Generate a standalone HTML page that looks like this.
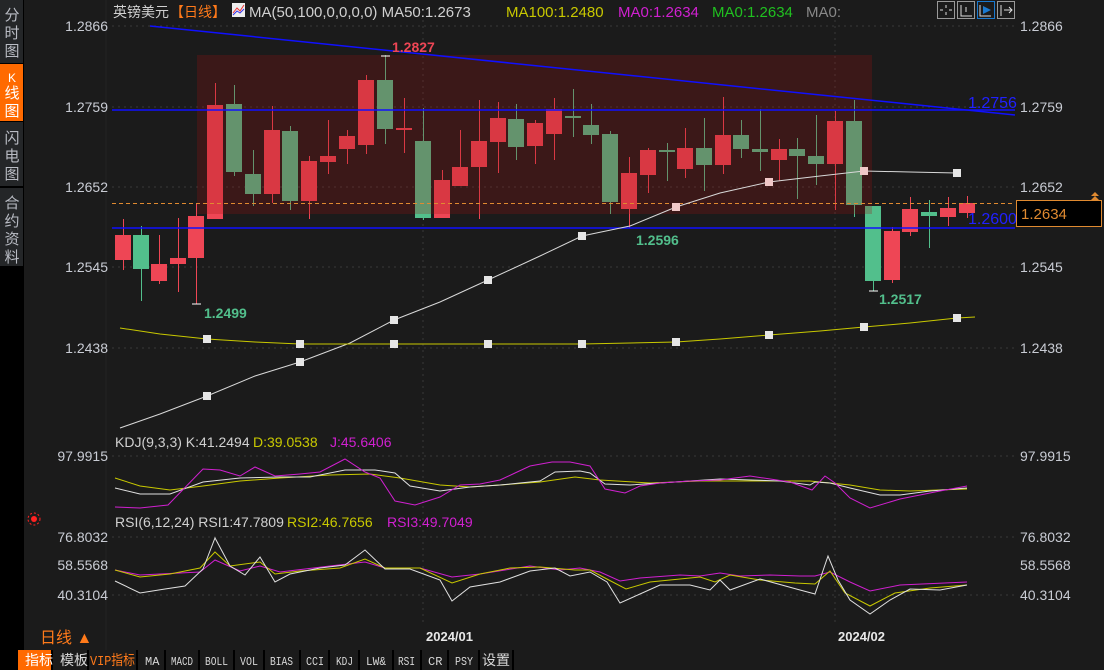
<!DOCTYPE html>
<html><head><meta charset="utf-8"><style>
body{margin:0;background:#1b1b1b;width:1104px;height:670px;overflow:hidden}
svg{display:block;font-family:"Liberation Sans","Noto Sans CJK SC",sans-serif}
.ax{fill:#c9ccd4;font-size:14px}
.tb{font-family:"Liberation Mono","Noto Sans CJK SC",monospace;font-size:12px;fill:#d8d8d8}
</style></head><body>
<svg width="1104" height="670" viewBox="0 0 1104 670">
<rect width="1104" height="670" fill="#1b1b1b"/>
<rect x="0" y="0" width="24" height="650" fill="#000"/>
<rect x="0" y="0" width="23" height="63" fill="#242628"/>
<rect x="0" y="64" width="23" height="57" fill="#ff6a00"/>
<rect x="0" y="122" width="23" height="64" fill="#242628"/>
<rect x="0" y="188" width="23" height="78" fill="#242628"/>
<g font-size="15" fill="#b9bcc4" text-anchor="middle">
<text x="12" y="20">分</text><text x="12" y="38">时</text><text x="12" y="56">图</text>
<text x="12" y="82" fill="#fff" font-size="12">K</text><text x="12" y="98" fill="#fff">线</text><text x="12" y="116" fill="#fff">图</text>
<text x="12" y="143">闪</text><text x="12" y="161">电</text><text x="12" y="179">图</text>
<text x="12" y="208">合</text><text x="12" y="226">约</text><text x="12" y="244">资</text><text x="12" y="262">料</text>
</g>
<line x1="106" y1="0" x2="106" y2="650" stroke="#232323"/>
<g stroke="#3a3a3a" stroke-dasharray="2,4">
<line x1="112" y1="26" x2="1015" y2="26"/><line x1="112" y1="107" x2="1015" y2="107"/><line x1="112" y1="187" x2="1015" y2="187"/><line x1="112" y1="267" x2="1015" y2="267"/><line x1="112" y1="348" x2="1015" y2="348"/>
<line x1="112" y1="456" x2="1015" y2="456"/><line x1="112" y1="537" x2="1015" y2="537"/><line x1="112" y1="595" x2="1015" y2="595"/>
<line x1="423" y1="20" x2="423" y2="625"/><line x1="835" y1="20" x2="835" y2="625"/>
</g>
<g class="ax" text-anchor="end">
<text x="108" y="31">1.2866</text><text x="108" y="112">1.2759</text><text x="108" y="192">1.2652</text><text x="108" y="272">1.2545</text><text x="108" y="353">1.2438</text>
<text x="108" y="461">97.9915</text><text x="108" y="542">76.8032</text><text x="108" y="570">58.5568</text><text x="108" y="600">40.3104</text>
</g>
<g class="ax">
<text x="1020" y="31">1.2866</text><text x="1020" y="112">1.2759</text><text x="1020" y="192">1.2652</text><text x="1020" y="272">1.2545</text><text x="1020" y="353">1.2438</text>
<text x="1020" y="461">97.9915</text><text x="1020" y="542">76.8032</text><text x="1020" y="570">58.5568</text><text x="1020" y="600">40.3104</text>
</g>
<g stroke-width="1">
<g fill="#ee4655" stroke="#ee4655">
<line x1="123.5" y1="219" x2="123.5" y2="270"/><rect x="115" y="235" width="16" height="25" stroke="none"/>
<line x1="159.5" y1="235" x2="159.5" y2="284"/><rect x="151" y="264" width="16" height="17" stroke="none"/>
<line x1="178.5" y1="218" x2="178.5" y2="292"/><rect x="170" y="258" width="16" height="6" stroke="none"/>
<line x1="196.5" y1="203" x2="196.5" y2="304"/><rect x="188" y="216" width="16" height="42" stroke="none"/>
<line x1="215.5" y1="83" x2="215.5" y2="219"/><rect x="207" y="105" width="16" height="114" stroke="none"/>
<line x1="272.5" y1="106" x2="272.5" y2="203"/><rect x="264" y="130" width="16" height="64" stroke="none"/>
<line x1="309.5" y1="156" x2="309.5" y2="219"/><rect x="301" y="161" width="16" height="40" stroke="none"/>
<line x1="328.5" y1="120" x2="328.5" y2="174"/><rect x="320" y="156" width="16" height="6" stroke="none"/>
<line x1="347.5" y1="130" x2="347.5" y2="164"/><rect x="339" y="136" width="16" height="13" stroke="none"/>
<line x1="366.5" y1="75" x2="366.5" y2="154"/><rect x="358" y="80" width="16" height="65" stroke="none"/>
<line x1="404.5" y1="98" x2="404.5" y2="153"/><rect x="396" y="128" width="16" height="2" stroke="none"/>
<line x1="442.5" y1="170" x2="442.5" y2="218"/><rect x="434" y="180" width="16" height="38" stroke="none"/>
<line x1="460.5" y1="130" x2="460.5" y2="186"/><rect x="452" y="167" width="16" height="19" stroke="none"/>
<line x1="479.5" y1="100" x2="479.5" y2="219"/><rect x="471" y="141" width="16" height="26" stroke="none"/>
<line x1="498.5" y1="102" x2="498.5" y2="173"/><rect x="490" y="118" width="16" height="24" stroke="none"/>
<line x1="535.5" y1="120" x2="535.5" y2="164"/><rect x="527" y="123" width="16" height="23" stroke="none"/>
<line x1="554.5" y1="98" x2="554.5" y2="160"/><rect x="546" y="109" width="16" height="25" stroke="none"/>
<line x1="629.5" y1="157" x2="629.5" y2="228"/><rect x="621" y="173" width="16" height="36" stroke="none"/>
<line x1="648.5" y1="148" x2="648.5" y2="193"/><rect x="640" y="150" width="16" height="25" stroke="none"/>
<line x1="685.5" y1="128" x2="685.5" y2="178"/><rect x="677" y="148" width="16" height="21" stroke="none"/>
<line x1="723.5" y1="97" x2="723.5" y2="174"/><rect x="715" y="135" width="16" height="30" stroke="none"/>
<line x1="779.5" y1="139" x2="779.5" y2="181"/><rect x="771" y="149" width="16" height="11" stroke="none"/>
<line x1="835.5" y1="111" x2="835.5" y2="210"/><rect x="827" y="121" width="16" height="43" stroke="none"/>
<line x1="892.5" y1="227" x2="892.5" y2="283"/><rect x="884" y="231" width="16" height="49" stroke="none"/>
<line x1="910.5" y1="197" x2="910.5" y2="236"/><rect x="902" y="209" width="16" height="23" stroke="none"/>
<line x1="948.5" y1="197" x2="948.5" y2="226"/><rect x="940" y="208" width="16" height="9" stroke="none"/>
<line x1="967.5" y1="196" x2="967.5" y2="218"/><rect x="959" y="203" width="16" height="10" stroke="none"/>
</g>
<g fill="#52bf8c" stroke="#52bf8c">
<line x1="141.5" y1="226" x2="141.5" y2="301"/><rect x="133" y="235" width="16" height="34" stroke="none"/>
<line x1="234.5" y1="85" x2="234.5" y2="176"/><rect x="226" y="104" width="16" height="68" stroke="none"/>
<line x1="253.5" y1="150" x2="253.5" y2="206"/><rect x="245" y="174" width="16" height="20" stroke="none"/>
<line x1="290.5" y1="126" x2="290.5" y2="210"/><rect x="282" y="131" width="16" height="70" stroke="none"/>
<line x1="385.5" y1="55" x2="385.5" y2="144"/><rect x="377" y="80" width="16" height="49" stroke="none"/>
<line x1="423.5" y1="108" x2="423.5" y2="220"/><rect x="415" y="141" width="16" height="77" stroke="none"/>
<line x1="516.5" y1="104" x2="516.5" y2="160"/><rect x="508" y="119" width="16" height="28" stroke="none"/>
<line x1="573.5" y1="89" x2="573.5" y2="137"/><rect x="565" y="116" width="16" height="2" stroke="none"/>
<line x1="591.5" y1="104" x2="591.5" y2="144"/><rect x="583" y="125" width="16" height="10" stroke="none"/>
<line x1="610.5" y1="131" x2="610.5" y2="214"/><rect x="602" y="134" width="16" height="68" stroke="none"/>
<line x1="667.5" y1="143" x2="667.5" y2="181"/><rect x="659" y="150" width="16" height="2" stroke="none"/>
<line x1="704.5" y1="118" x2="704.5" y2="191"/><rect x="696" y="148" width="16" height="17" stroke="none"/>
<line x1="741.5" y1="120" x2="741.5" y2="158"/><rect x="733" y="135" width="16" height="14" stroke="none"/>
<line x1="760.5" y1="109" x2="760.5" y2="171"/><rect x="752" y="149" width="16" height="3" stroke="none"/>
<line x1="797.5" y1="138" x2="797.5" y2="199"/><rect x="789" y="149" width="16" height="7" stroke="none"/>
<line x1="816.5" y1="115" x2="816.5" y2="185"/><rect x="808" y="156" width="16" height="8" stroke="none"/>
<line x1="854.5" y1="100" x2="854.5" y2="217"/><rect x="846" y="121" width="16" height="84" stroke="none"/>
<line x1="873.5" y1="206" x2="873.5" y2="291"/><rect x="865" y="206" width="16" height="75" stroke="none"/>
<line x1="929.5" y1="200" x2="929.5" y2="248"/><rect x="921" y="212" width="16" height="4" stroke="none"/>
</g>
</g>
<rect x="197" y="55" width="675" height="159" fill="rgb(155,15,15)" opacity="0.25"/>
<line x1="112" y1="203.5" x2="1015" y2="203.5" stroke="#e08a30" stroke-dasharray="4,3"/>
<line x1="112" y1="110" x2="1015" y2="110" stroke="#1010ff" stroke-width="1.5"/>
<line x1="112" y1="228" x2="1015" y2="228" stroke="#1010ff" stroke-width="1.5"/>
<line x1="150" y1="26" x2="1015" y2="115" stroke="#1010ff" stroke-width="1.5"/>
<text x="968" y="108" fill="#2020ff" font-size="16">1.2756</text>
<text x="968" y="224" fill="#2020ff" font-size="16">1.2600</text>
<polyline fill="none" stroke="#d8d8d8" points="120,428 160,414 207,396 255,376 300,362 350,343 394,320 440,302 488,280 540,256 582,236 630,226 676,207 720,193 769,182 820,176 864,171 910,172 957,173"/>
<polyline fill="none" stroke="#c8c800" points="120,328 160,334 207,339 255,342 300,344 394,344 488,344 582,344 676,342 720,339 769,335 820,331 864,327 910,323 957,318 975,317"/>
<g fill="#e6e6e6">
<rect x="203" y="392" width="8" height="8"/><rect x="296" y="358" width="8" height="8"/><rect x="390" y="316" width="8" height="8"/><rect x="484" y="276" width="8" height="8"/><rect x="578" y="232" width="8" height="8"/><rect x="672" y="203" width="8" height="8" fill="#f0c8c8"/><rect x="765" y="178" width="8" height="8" fill="#f0c8c8"/><rect x="860" y="167" width="8" height="8" fill="#f0c8c8"/><rect x="953" y="169" width="8" height="8"/>
<rect x="203" y="335" width="8" height="8"/><rect x="296" y="340" width="8" height="8"/><rect x="390" y="340" width="8" height="8"/><rect x="484" y="340" width="8" height="8"/><rect x="578" y="340" width="8" height="8"/><rect x="672" y="338" width="8" height="8"/><rect x="765" y="331" width="8" height="8"/><rect x="860" y="323" width="8" height="8"/><rect x="953" y="314" width="8" height="8"/>
</g>
<g font-size="14" font-weight="bold">
<text x="392" y="52" fill="#ee4655">1.2827</text>
<text x="204" y="318" fill="#52bf8c">1.2499</text>
<text x="636" y="245" fill="#52bf8c">1.2596</text>
<text x="879" y="304" fill="#52bf8c">1.2517</text>
</g>
<g stroke="#fff"><line x1="381" y1="56" x2="390" y2="56"/><line x1="192" y1="304" x2="201" y2="304"/><line x1="869" y1="291" x2="878" y2="291"/></g>
<rect x="1016.5" y="200.5" width="85" height="26" fill="#000" stroke="#e08a30"/>
<text x="1021" y="219" fill="#e08a30" font-size="15">1.2634</text>
<path d="M1091 196l4-4 4 4zM1091 200l4-4 4 4z" fill="#e08a30"/>
<g font-size="14">
<text x="113" y="17" fill="#d0d0d0">英镑美元</text>
<text x="170" y="17" fill="#ff7a1a">【日线】</text>
<rect x="232" y="3" width="13" height="14" fill="#eee"/><polyline points="233,13 237,8 240,11 244,5" stroke="#e33" fill="none"/><polyline points="233,15 237,11 240,13 244,9" stroke="#33e" fill="none"/>
<text x="249" y="17" fill="#d0d0d0" font-size="15">MA(50,100,0,0,0,0)  MA50:1.2673</text>
<text x="506" y="17" fill="#c8c800" font-size="15">MA100:1.2480</text>
<text x="618" y="17" fill="#d020d0" font-size="15">MA0:1.2634</text>
<text x="712" y="17" fill="#20c020" font-size="15">MA0:1.2634</text>
<text x="806" y="17" fill="#888" font-size="15">MA0:</text>
</g>
<g fill="none" stroke="#999"><rect x="937.5" y="1.5" width="17" height="17"/><rect x="957.5" y="1.5" width="17" height="17"/><rect x="977.5" y="1.5" width="17" height="17" stroke="#1a7ad0"/><rect x="997.5" y="1.5" width="17" height="17"/>
<path d="M946 5v3M946 12v3M940 10h3M949 10h3M961 5v11h11M966 7v5M980 5v11h11" stroke="#ddd"/><path d="M983 6l8 4-8 4z" fill="#1a7ad0" stroke="none"/><path d="M1001 5v11M1004 10h8M1009 7l3 3-3 3" stroke="#ddd"/></g>
<g font-size="14"><text x="115" y="447" fill="#d0d0d0">KDJ(9,3,3) K:41.2494</text><text x="253" y="447" fill="#c8c800">D:39.0538</text><text x="330" y="447" fill="#d020d0">J:45.6406</text></g>
<polyline fill="none" stroke="#c8c800" points="115,478 140,486 170,490 203,486 240,481 280,478 330,475 370,474 400,478 440,485 470,487 500,485 540,482 575,477 600,480 650,483 700,481 780,481 810,481 850,485 880,490 910,491 967,489"/>
<polyline fill="none" stroke="#e0e0e0" points="115,488 140,494 170,494 203,482 240,478 280,477 310,477 345,470 375,470 395,473 410,486 440,491 470,487 500,485 520,483 540,481 555,472 580,471 590,473 605,484 630,485 660,483 720,479 780,481 810,485 815,482 830,483 850,488 880,495 900,495 930,491 967,488"/>
<polyline fill="none" stroke="#d020d0" points="115,507 140,508 168,505 203,469 220,470 240,476 255,467 275,476 300,474 320,472 345,459 365,472 380,478 395,501 415,505 440,497 460,485 480,484 500,480 515,473 530,466 552,462 570,462 590,466 605,489 625,493 640,486 660,483 690,481 720,480 750,476 790,482 812,490 825,476 835,483 850,498 870,508 900,499 940,491 967,486"/>
<circle cx="34" cy="519" r="3" fill="#f22"/><circle cx="34" cy="519" r="6" fill="none" stroke="#f22" stroke-dasharray="2,2"/>
<g font-size="14"><text x="115" y="527" fill="#d0d0d0">RSI(6,12,24) RSI1:47.7809</text><text x="287" y="527" fill="#c8c800">RSI2:46.7656</text><text x="387" y="527" fill="#d020d0">RSI3:49.7049</text></g>
<polyline fill="none" stroke="#d020d0" points="115,570 140,575 200,572 215,560 240,571 260,566 280,572 330,566 365,562 385,568 420,568 452,577 480,574 530,566 560,570 580,568 600,572 620,581 640,578 680,575 700,576 720,573 740,576 770,575 800,576 815,576 830,572 850,582 870,591 900,585 967,582"/>
<polyline fill="none" stroke="#c8c800" points="115,570 140,577 170,574 200,568 215,552 230,566 260,562 275,574 300,571 340,568 365,559 385,568 420,568 452,583 480,574 510,568 540,567 575,570 590,570 605,578 626,589 650,582 680,579 700,577 715,582 730,575 760,580 795,583 815,584 830,571 845,593 870,606 895,593 930,588 967,585"/>
<polyline fill="none" stroke="#e0e0e0" points="115,581 140,593 165,589 185,586 203,569 215,538 230,566 245,575 260,557 275,582 290,574 320,568 345,565 365,550 385,569 410,569 440,580 452,601 470,587 500,582 530,571 555,568 570,576 590,572 607,582 620,603 640,594 660,585 690,585 710,590 720,580 730,590 760,579 800,590 815,594 828,556 838,580 850,600 870,614 890,600 910,589 940,590 967,585"/>
<text x="40" y="643" fill="#ff7a1a" font-size="16">日线 ▲</text>
<text x="426" y="641" fill="#e8e8e8" font-size="13" font-weight="bold">2024/01</text>
<text x="838" y="641" fill="#e8e8e8" font-size="13" font-weight="bold">2024/02</text>
<rect x="0" y="650" width="1104" height="20" fill="#1b1b1b"/>
<rect x="0" y="650" width="18" height="20" fill="#000"/>
<rect x="18" y="650" width="34" height="20" fill="#ff6a00"/>
<g stroke="#000" stroke-width="2"><line x1="52" y1="650" x2="52" y2="670"/><line x1="88" y1="650" x2="88" y2="670"/><line x1="137" y1="650" x2="137" y2="670"/><line x1="165" y1="650" x2="165" y2="670"/><line x1="199" y1="650" x2="199" y2="670"/><line x1="234" y1="650" x2="234" y2="670"/><line x1="264" y1="650" x2="264" y2="670"/><line x1="300" y1="650" x2="300" y2="670"/><line x1="329" y1="650" x2="329" y2="670"/><line x1="359" y1="650" x2="359" y2="670"/><line x1="393" y1="650" x2="393" y2="670"/><line x1="421" y1="650" x2="421" y2="670"/><line x1="448" y1="650" x2="448" y2="670"/><line x1="479" y1="650" x2="479" y2="670"/><line x1="513" y1="650" x2="513" y2="670"/></g>
<g class="tb">
<text x="25" y="665" fill="#fff" font-size="14">指标</text><text x="60" y="665" font-size="14">模板</text><text x="90" y="665" fill="#ff7a1a" font-size="14" textLength="45" lengthAdjust="spacingAndGlyphs">VIP指标</text>
<text x="145" y="665">MA</text><text x="171" y="665" textLength="22" lengthAdjust="spacingAndGlyphs">MACD</text><text x="205" y="665" textLength="23" lengthAdjust="spacingAndGlyphs">BOLL</text><text x="240" y="665" textLength="18" lengthAdjust="spacingAndGlyphs">VOL</text><text x="270" y="665" textLength="23" lengthAdjust="spacingAndGlyphs">BIAS</text><text x="306" y="665" textLength="18" lengthAdjust="spacingAndGlyphs">CCI</text><text x="336" y="665" textLength="17" lengthAdjust="spacingAndGlyphs">KDJ</text><text x="366" y="665" textLength="20" lengthAdjust="spacingAndGlyphs">LW&amp;</text><text x="398" y="665" textLength="17" lengthAdjust="spacingAndGlyphs">RSI</text><text x="428" y="665">CR</text><text x="455" y="665" textLength="18" lengthAdjust="spacingAndGlyphs">PSY</text><text x="482" y="665" font-size="14">设置</text>
</g>
</svg>
</body></html>
